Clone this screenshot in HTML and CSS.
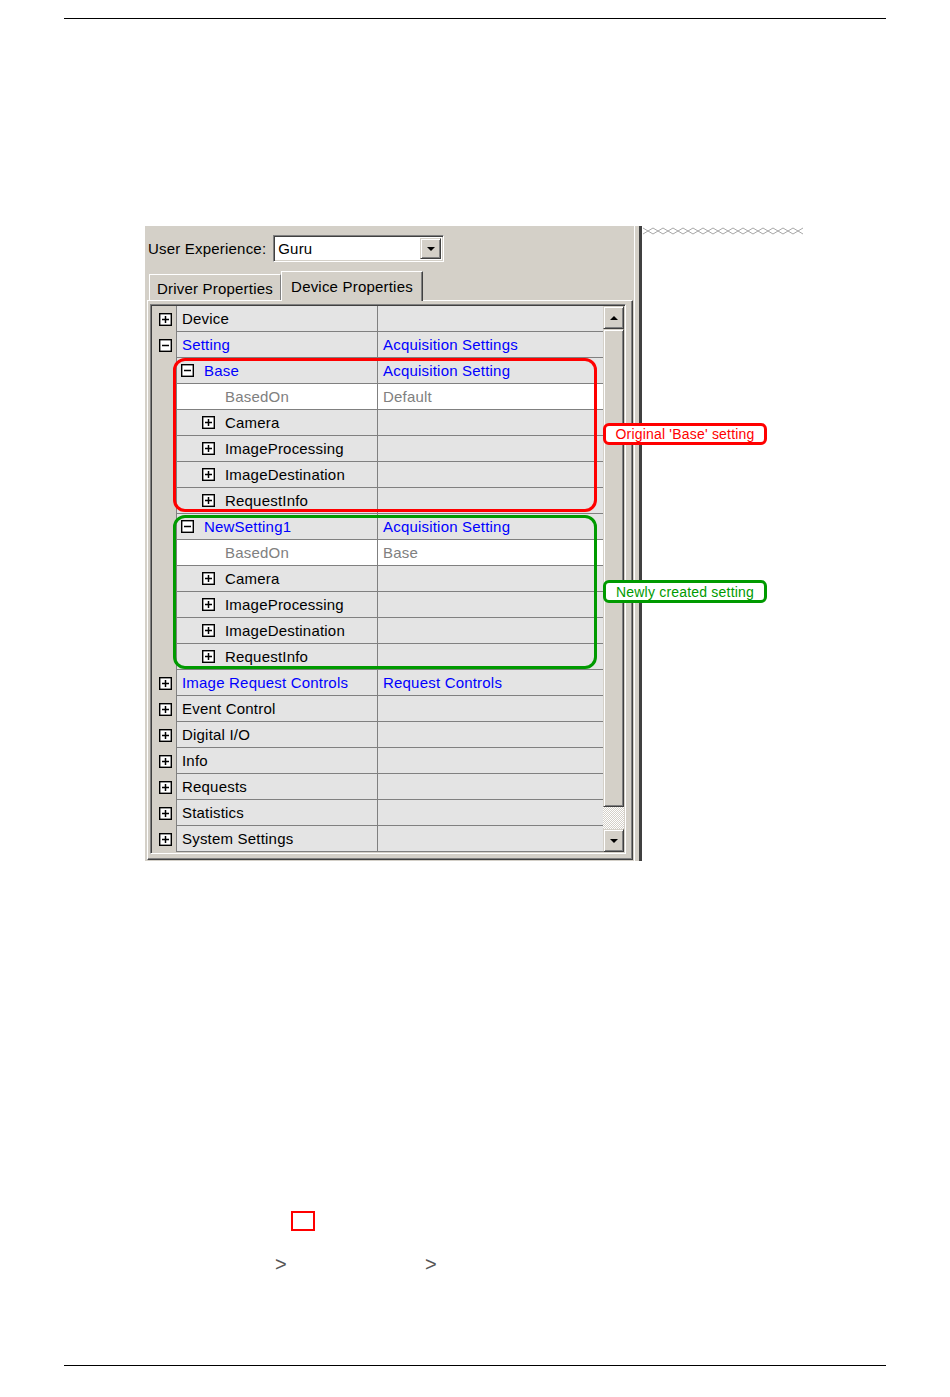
FILE: index.html
```html
<!DOCTYPE html>
<html>
<head>
<meta charset="utf-8">
<link rel="stylesheet" href="styles.css">
<title>Device Properties</title>
</head>
<body>
<svg class="defs" width="0" height="0">
  <symbol id="plus" viewBox="0 0 13 13"><rect x="0.7" y="0.7" width="11.6" height="11.6" fill="#fff" stroke="#000" stroke-width="1.4"/><path d="M3 6.5h7M6.5 3v7" stroke="#000" stroke-width="1.5"/></symbol>
  <symbol id="minus" viewBox="0 0 13 13"><rect x="0.7" y="0.7" width="11.6" height="11.6" fill="#fff" stroke="#000" stroke-width="1.4"/><path d="M3 6.5h7" stroke="#000" stroke-width="1.5"/></symbol>
</svg>

<div class="rule"></div>

<div class="figure">
  <div class="panel">
    <div class="ux">
      <span class="ux-label">User Experience:</span>
      <div class="combo">
        <span class="combo-text">Guru</span>
        <span class="combo-btn raised"><span class="arrow-down"></span></span>
      </div>
    </div>
    <div class="tabs">
      <div class="tab">Driver Properties</div>
      <div class="tab active">Device Properties</div>
    </div>
    <div class="tabframe">
      <div class="grid">
        <div class="rows">
          <div class="row"><div class="gut"><svg class="tg"><use href="#plus"/></svg></div><div class="name l0">Device</div><div class="val"></div></div>
          <div class="row blue"><div class="gut"><svg class="tg"><use href="#minus"/></svg></div><div class="name l0">Setting</div><div class="val">Acquisition Settings</div></div>
          <div class="row blue"><div class="gut"></div><div class="name l1"><svg class="tg"><use href="#minus"/></svg>Base</div><div class="val">Acquisition Setting</div></div>
          <div class="row grey white"><div class="gut"></div><div class="name lb">BasedOn</div><div class="val">Default</div></div>
          <div class="row"><div class="gut"></div><div class="name l2"><svg class="tg"><use href="#plus"/></svg>Camera</div><div class="val"></div></div>
          <div class="row"><div class="gut"></div><div class="name l2"><svg class="tg"><use href="#plus"/></svg>ImageProcessing</div><div class="val"></div></div>
          <div class="row"><div class="gut"></div><div class="name l2"><svg class="tg"><use href="#plus"/></svg>ImageDestination</div><div class="val"></div></div>
          <div class="row"><div class="gut"></div><div class="name l2"><svg class="tg"><use href="#plus"/></svg>RequestInfo</div><div class="val"></div></div>
          <div class="row blue"><div class="gut"></div><div class="name l1"><svg class="tg"><use href="#minus"/></svg>NewSetting1</div><div class="val">Acquisition Setting</div></div>
          <div class="row grey white"><div class="gut"></div><div class="name lb">BasedOn</div><div class="val">Base</div></div>
          <div class="row"><div class="gut"></div><div class="name l2"><svg class="tg"><use href="#plus"/></svg>Camera</div><div class="val"></div></div>
          <div class="row"><div class="gut"></div><div class="name l2"><svg class="tg"><use href="#plus"/></svg>ImageProcessing</div><div class="val"></div></div>
          <div class="row"><div class="gut"></div><div class="name l2"><svg class="tg"><use href="#plus"/></svg>ImageDestination</div><div class="val"></div></div>
          <div class="row"><div class="gut"></div><div class="name l2"><svg class="tg"><use href="#plus"/></svg>RequestInfo</div><div class="val"></div></div>
          <div class="row blue"><div class="gut"><svg class="tg"><use href="#plus"/></svg></div><div class="name l0">Image Request Controls</div><div class="val">Request Controls</div></div>
          <div class="row"><div class="gut"><svg class="tg"><use href="#plus"/></svg></div><div class="name l0">Event Control</div><div class="val"></div></div>
          <div class="row"><div class="gut"><svg class="tg"><use href="#plus"/></svg></div><div class="name l0">Digital I/O</div><div class="val"></div></div>
          <div class="row"><div class="gut"><svg class="tg"><use href="#plus"/></svg></div><div class="name l0">Info</div><div class="val"></div></div>
          <div class="row"><div class="gut"><svg class="tg"><use href="#plus"/></svg></div><div class="name l0">Requests</div><div class="val"></div></div>
          <div class="row"><div class="gut"><svg class="tg"><use href="#plus"/></svg></div><div class="name l0">Statistics</div><div class="val"></div></div>
          <div class="row"><div class="gut"><svg class="tg"><use href="#plus"/></svg></div><div class="name l0">System Settings</div><div class="val"></div></div>
        </div>
        <div class="scroll">
          <div class="sbtn raised"><span class="arrow-up"></span></div>
          <div class="thumb raised"></div>
          <div class="track"></div>
          <div class="sbtn raised"><span class="arrow-down"></span></div>
        </div>
      </div>
    </div>
  </div>
  <div class="splitter"></div>
  <div class="side">
    <svg class="zigzag" width="162" height="8" viewBox="0 0 162 8">
      <path d="M0 1l10 6 10-6 10 6 10-6 10 6 10-6 10 6 10-6 10 6 10-6 10 6 10-6 10 6 10-6 10 6 10-6" fill="none" stroke="#a8a8a8"/>
      <path d="M0 7l10-6 10 6 10-6 10 6 10-6 10 6 10-6 10 6 10-6 10 6 10-6 10 6 10-6 10 6 10-6 10 6" fill="none" stroke="#a8a8a8"/>
    </svg>
  </div>

  <div class="mark mark-red"></div>
  <div class="mark mark-green"></div>
  <div class="tag tag-red">Original 'Base' setting</div>
  <div class="tag tag-green">Newly created setting</div>
</div>

<div class="notes"></div>
<div class="crumbs"><span class="crumb">&gt;</span><span class="crumb">&gt;</span></div>

<div class="rule rule-bottom"></div>
</body>
</html>
```

FILE: styles.css
```css
* {
  box-sizing: border-box;
}
html {
  font-family: "Liberation Sans", Arial, sans-serif;
  background-color: white;
  color: black;
}
body {
  margin: 0;
}
.defs {
  position: absolute;
}
.rule {
  margin: 18px 64px 0;
  border-top: 1px solid #000;
}
.rule-bottom {
  margin-top: 92px;
}

/* screenshot */
.figure {
  position: relative;
  display: flex;
  margin: 207px 0 0 145px;
  height: 635px;
  font-size: 15px;
  letter-spacing: 0.2px;
}
.panel {
  width: 489px;
  background-color: #d4d0c8;
  padding: 9px 0 1px 2px;
}
.splitter {
  width: 8px;
  background-color: #d4d0c8;
  border-left: 1px solid #fff;
  border-right: 3px solid #404040;
}
.side {
  padding: 1px 0 0 1px;
}
.zigzag {
  display: block;
}

.raised {
  background-color: #d4d0c8;
  border: 1px solid;
  border-color: #d4d0c8 #404040 #404040 #d4d0c8;
  box-shadow: inset 1px 1px #fff, inset -1px -1px #808080;
}

.ux {
  display: flex;
  align-items: center;
  height: 27px;
  padding-left: 1px;
}
.combo {
  display: flex;
  width: 171px;
  height: 27px;
  margin-left: 7px;
  padding: 2px;
  background-color: #fff;
  border: 1px solid;
  border-color: #808080 #fff #fff #808080;
  box-shadow: inset 1px 1px #404040, inset -1px -1px #d4d0c8;
}
.combo-text {
  flex: 1;
  padding-left: 2px;
  line-height: 21px;
}
.combo-btn {
  width: 21px;
  display: flex;
  align-items: center;
  justify-content: center;
}
.arrow-down {
  border-left: 4px solid transparent;
  border-right: 4px solid transparent;
  border-top: 4px solid #000;
}
.arrow-up {
  border-left: 4px solid transparent;
  border-right: 4px solid transparent;
  border-bottom: 4px solid #000;
}

.tabs {
  position: relative;
  z-index: 1;
  display: flex;
  align-items: flex-end;
  height: 29px;
  margin-top: 9px;
  padding-left: 2px;
}
.tab {
  width: 132px;
  height: 26px;
  padding-top: 2px;
  border: 1px solid;
  border-color: #fff #808080 transparent #fff;
  border-bottom: none;
  display: flex;
  align-items: center;
  justify-content: center;
}
.tab.active {
  width: 142px;
  height: 30px;
  padding-top: 0;
  margin-bottom: -1px;
  background-color: #d4d0c8;
  border-right-color: #404040;
  box-shadow: inset -1px 0 #808080;
}

.tabframe {
  width: 486px;
  height: 560px;
  padding: 3px 6px 5px 2px;
  border: 1px solid;
  border-color: #fff #404040 #404040 #fff;
  box-shadow: inset -1px -1px #808080;
}
.grid {
  display: flex;
  width: 476px;
  padding: 1px;
  border: 1px solid;
  border-color: #808080 #fff #fff #808080;
  box-shadow: inset 1px 1px #404040, inset -1px -1px #d4d0c8;
}
.rows {
  flex: 1;
}
.row {
  display: flex;
  height: 26px;
}
.gut {
  width: 24px;
  padding-left: 2px;
  background-color: #d4d0c8;
  display: flex;
  align-items: center;
  justify-content: center;
}
.name, .val {
  display: flex;
  align-items: center;
  background-color: #e4e4e4;
  border-left: 1px solid #808080;
  border-bottom: 1px solid #808080;
  white-space: nowrap;
}
.name {
  width: 201px;
  gap: 10px;
}
.val {
  flex: 1;
  padding-left: 5px;
}
.name.l0 { padding-left: 5px; }
.name.l1 { padding-left: 4px; }
.name.l2 { padding-left: 25px; }
.name.lb { padding-left: 48px; }
.row.white .name, .row.white .val {
  background-color: #fff;
}
.row.blue { color: #0000ff; }
.row.grey { color: #808080; }
.tg {
  width: 13px;
  height: 13px;
  flex: none;
}

.scroll {
  width: 21px;
  display: flex;
  flex-direction: column;
}
.sbtn {
  height: 23px;
  display: flex;
  align-items: center;
  justify-content: center;
}
.thumb {
  flex: 1;
}
.track {
  height: 22px;
  background: repeating-conic-gradient(#d4d0c8 0 25%, #fff 0 50%) 0 0 / 2px 2px;
}

/* annotations */
.mark {
  position: absolute;
  left: 28px;
  width: 424px;
  height: 154px;
  border: 3px solid;
  border-radius: 12px;
}
.mark-red {
  top: 132px;
  border-color: #ff0000;
}
.mark-green {
  top: 289px;
  border-color: #009a00;
}
.tag {
  position: absolute;
  left: 458px;
  width: 164px;
  height: 22px;
  border: 3px solid;
  border-radius: 6px;
  background-color: #fff;
  font-size: 14px;
  letter-spacing: 0.2px;
  display: flex;
  align-items: center;
  justify-content: center;
}
.tag-red {
  top: 197px;
  color: #ff0000;
  border-color: #ff0000;
}
.tag-green {
  top: 354px;
  height: 23px;
  color: #009a00;
  border-color: #009a00;
}

/* below */
.notes {
  width: 24px;
  height: 20px;
  margin: 350px 0 0 291px;
  border: 2px solid #ff0000;
}
.crumbs {
  display: flex;
  margin-top: 24px;
  padding-left: 275px;
  height: 18px;
  font-size: 20px;
  line-height: 18px;
  color: #555;
}
.crumb {
  width: 150px;
}
```
